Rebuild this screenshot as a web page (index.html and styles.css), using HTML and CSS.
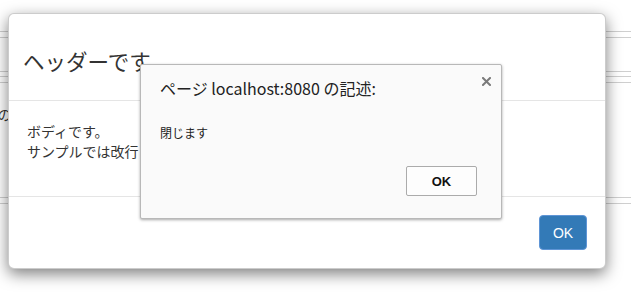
FILE: index.html
```html
<!DOCTYPE html>
<html lang="ja">
<head>
<meta charset="utf-8">
<title>modal</title>
<link rel="stylesheet" href="styles.css">
</head>
<body>
<div class="page">
  <div class="rule r1"></div>
  <div class="rule r2"></div>
  <div class="rule r3"></div>
  <div class="rule r4"></div>
  <div class="rule r5"></div>
  <div class="bg-text">
    <p>テキストの</p>
    <p>朝食</p>
  </div>
  <div class="rule r6"></div>
  <div class="rule r7"></div>
</div>

<div class="modal">
  <div class="modal-content">
    <div class="modal-header">
      <h4 class="modal-title">ヘッダーです</h4>
    </div>
    <div class="modal-body">
      <p>ボディです。</p>
      <p>サンプルでは改行されます。</p>
    </div>
    <div class="modal-footer">
      <button class="btn-primary" type="button">OK</button>
    </div>
  </div>
</div>

<div class="alert-dialog">
  <div class="alert-title">ページ localhost:8080 の記述:</div>
  <svg class="alert-close" width="9" height="9" viewBox="0 0 9 9" aria-hidden="true">
    <path d="M1 1 L8 8 M8 1 L1 8" stroke="#7a7a7a" stroke-width="2" stroke-linecap="square"/>
  </svg>
  <div class="alert-message">閉じます</div>
  <div class="alert-actions">
    <button class="alert-ok" type="button">OK</button>
  </div>
</div>
</body>
</html>
```
FILE: styles.css
```css
html, body {
  margin: 0;
  padding: 0;
  background: #ffffff;
  width: 631px;
  height: 299px;
  overflow: hidden;
  font-family: "Noto Sans CJK JP", "Noto Sans", sans-serif;
  color: #333333;
}

.page {
  position: relative;
  padding-top: 31px;
}

.rule {
  border-top: 1px solid #cfcfcf;
  height: 0;
}
.r2 { margin-top: 5px; }
.r3 { margin-top: 33px; }
.r4 { margin-top: 4px; }
.r5 { margin-top: 5px; }
.r6 { margin-top: 47px; }
.r7 { margin-top: 5px; }

.bg-text {
  margin-left: -58px;
  padding-top: 19px;
  font-size: 14px;
  line-height: 24px;
  color: #333;
}
.bg-text p { margin: 0; }

.modal {
  position: absolute;
  left: 8px;
  top: 13px;
}

.modal-content {
  width: 596px;
  background: #ffffff;
  border: 1px solid rgba(0, 0, 0, 0.2);
  border-radius: 6px;
  box-shadow: 0 5px 15px rgba(0, 0, 0, 0.5);
}

.modal-header {
  padding: 32px 14px 24px 14px;
  border-bottom: 1px solid #e5e5e5;
}

.modal-title {
  margin: 0;
  font-size: 21.5px;
  font-weight: normal;
  line-height: 30px;
  color: #333;
}

.modal-body {
  padding: 20px 18px 35px 18px;
  font-size: 14px;
  line-height: 20px;
}
.modal-body p { margin: 0; }

.modal-footer {
  display: flex;
  justify-content: flex-end;
  padding: 18px 18px 18px 18px;
  border-top: 1px solid #e5e5e5;
}

.btn-primary {
  width: 48px;
  height: 35px;
  padding: 0;
  font-family: "Liberation Sans", Arial, sans-serif;
  font-size: 14px;
  color: #ffffff;
  background: #337ab7;
  border: 1px solid #5f95d6;
  border-radius: 4px;
}

.alert-dialog {
  position: absolute;
  left: 140px;
  top: 64px;
  width: 317px;
  display: flex;
  flex-direction: column;
  padding: 11px 24px 22px 19px;
  background: #fafafa;
  border: 1px solid #b8b8b8;
  border-radius: 2px;
  box-shadow: 0 1px 3px rgba(0, 0, 0, 0.35);
}

.alert-title {
  font-size: 16px;
  line-height: 24px;
  color: #222;
}

.alert-close {
  position: absolute;
  right: 10px;
  top: 12px;
}

.alert-message {
  margin-top: 24px;
  font-size: 12px;
  line-height: 18px;
  color: #222;
}

.alert-actions {
  display: flex;
  justify-content: flex-end;
  margin-top: 24px;
}

.alert-ok {
  width: 71px;
  height: 30px;
  padding: 0;
  font-family: "Liberation Sans", Arial, sans-serif;
  font-size: 13px;
  font-weight: bold;
  color: #111;
  background: #fdfdfd;
  border: 1px solid #ababab;
  border-radius: 2px;
}
```
